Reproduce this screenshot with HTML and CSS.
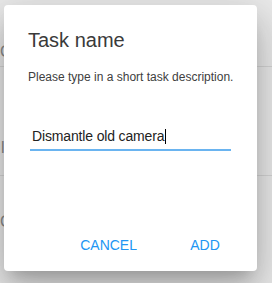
FILE: index.html
```html
<!DOCTYPE html>
<html lang="en">
<head>
    <meta charset="UTF-8">
    <meta name="viewport" content="width=device-width, initial-scale=1.0">
    <title>Task name</title>
    <link rel="stylesheet" href="styles.css">
</head>
<body>
    <ul class="task-list">
        <li class="item item-first">Ca</li>
        <li class="item item-second">li</li>
        <li class="item item-third">Co</li>
    </ul>

    <div class="dialog">
        <h2 class="dialog-title">Task name</h2>
        <p class="dialog-text">Please type in a short task description.</p>
        <div class="field">
            <span class="field-value">Dismantle old camera</span><span class="caret"></span>
        </div>
        <div class="actions">
            <button class="btn btn-cancel">CANCEL</button>
            <button class="btn">ADD</button>
        </div>
    </div>
</body>
</html>
```

FILE: styles.css
```css
* {
    margin: 0;
    padding: 0;
    box-sizing: border-box;
}
body {
    background: #ebebeb;
    font-family: "Liberation Sans", Arial, sans-serif;
    overflow: hidden;
}
.task-list {
    list-style: none;
}
.item {
    font-size: 16px;
    line-height: 20px;
    color: #8a8a8a;
    border-bottom: 1px solid #d6d6d6;
    white-space: nowrap;
}
.item-first {
    padding: 42px 0 4px;
}
.item-second {
    padding: 71px 0 17px 1px;
}
.item-third {
    padding-top: 36px;
    border-bottom: none;
}

/* dialog lies over the list */
.dialog {
    position: absolute;
    top: 5px;
    left: 4px;
    width: 253px;
    background: #fff;
    border-radius: 4px;
    padding: 19px 0 10px;
    box-shadow: 0 11px 15px -7px rgba(0,0,0,0.2), 0 24px 38px 3px rgba(0,0,0,0.14), 0 9px 46px 8px rgba(0,0,0,0.12);
}
.dialog-title {
    font-size: 20px;
    font-weight: normal;
    line-height: 32px;
    color: #3a3a3a;
    padding-left: 24px;
}
.dialog-text {
    margin-top: 12px;
    font-size: 12px;
    line-height: 18px;
    color: #404040;
    padding-left: 24px;
}
.field {
    margin: 40px 0 0 26px;
    width: 201px;
    padding: 0 0 3px 2px;
    font-size: 14px;
    letter-spacing: -0.15px;
    line-height: 20px;
    color: #222;
    border-bottom: 2px solid #6ab4f0;
    display: flex;
    align-items: center;
}
.caret {
    display: inline-block;
    width: 1px;
    height: 15px;
    background: #000;
    margin-left: 1px;
}
.actions {
    margin-top: 78px;
    display: flex;
    justify-content: flex-end;
    padding-right: 20px;
}
.btn {
    min-width: 64px;
    padding: 6px 8px;
    border: none;
    background: none;
    font-family: "Liberation Sans", Arial, sans-serif;
    font-size: 14px;
    line-height: 20px;
    color: #2196f3;
    text-align: center;
}
.btn-cancel {
    margin-right: 28px;
}
```
